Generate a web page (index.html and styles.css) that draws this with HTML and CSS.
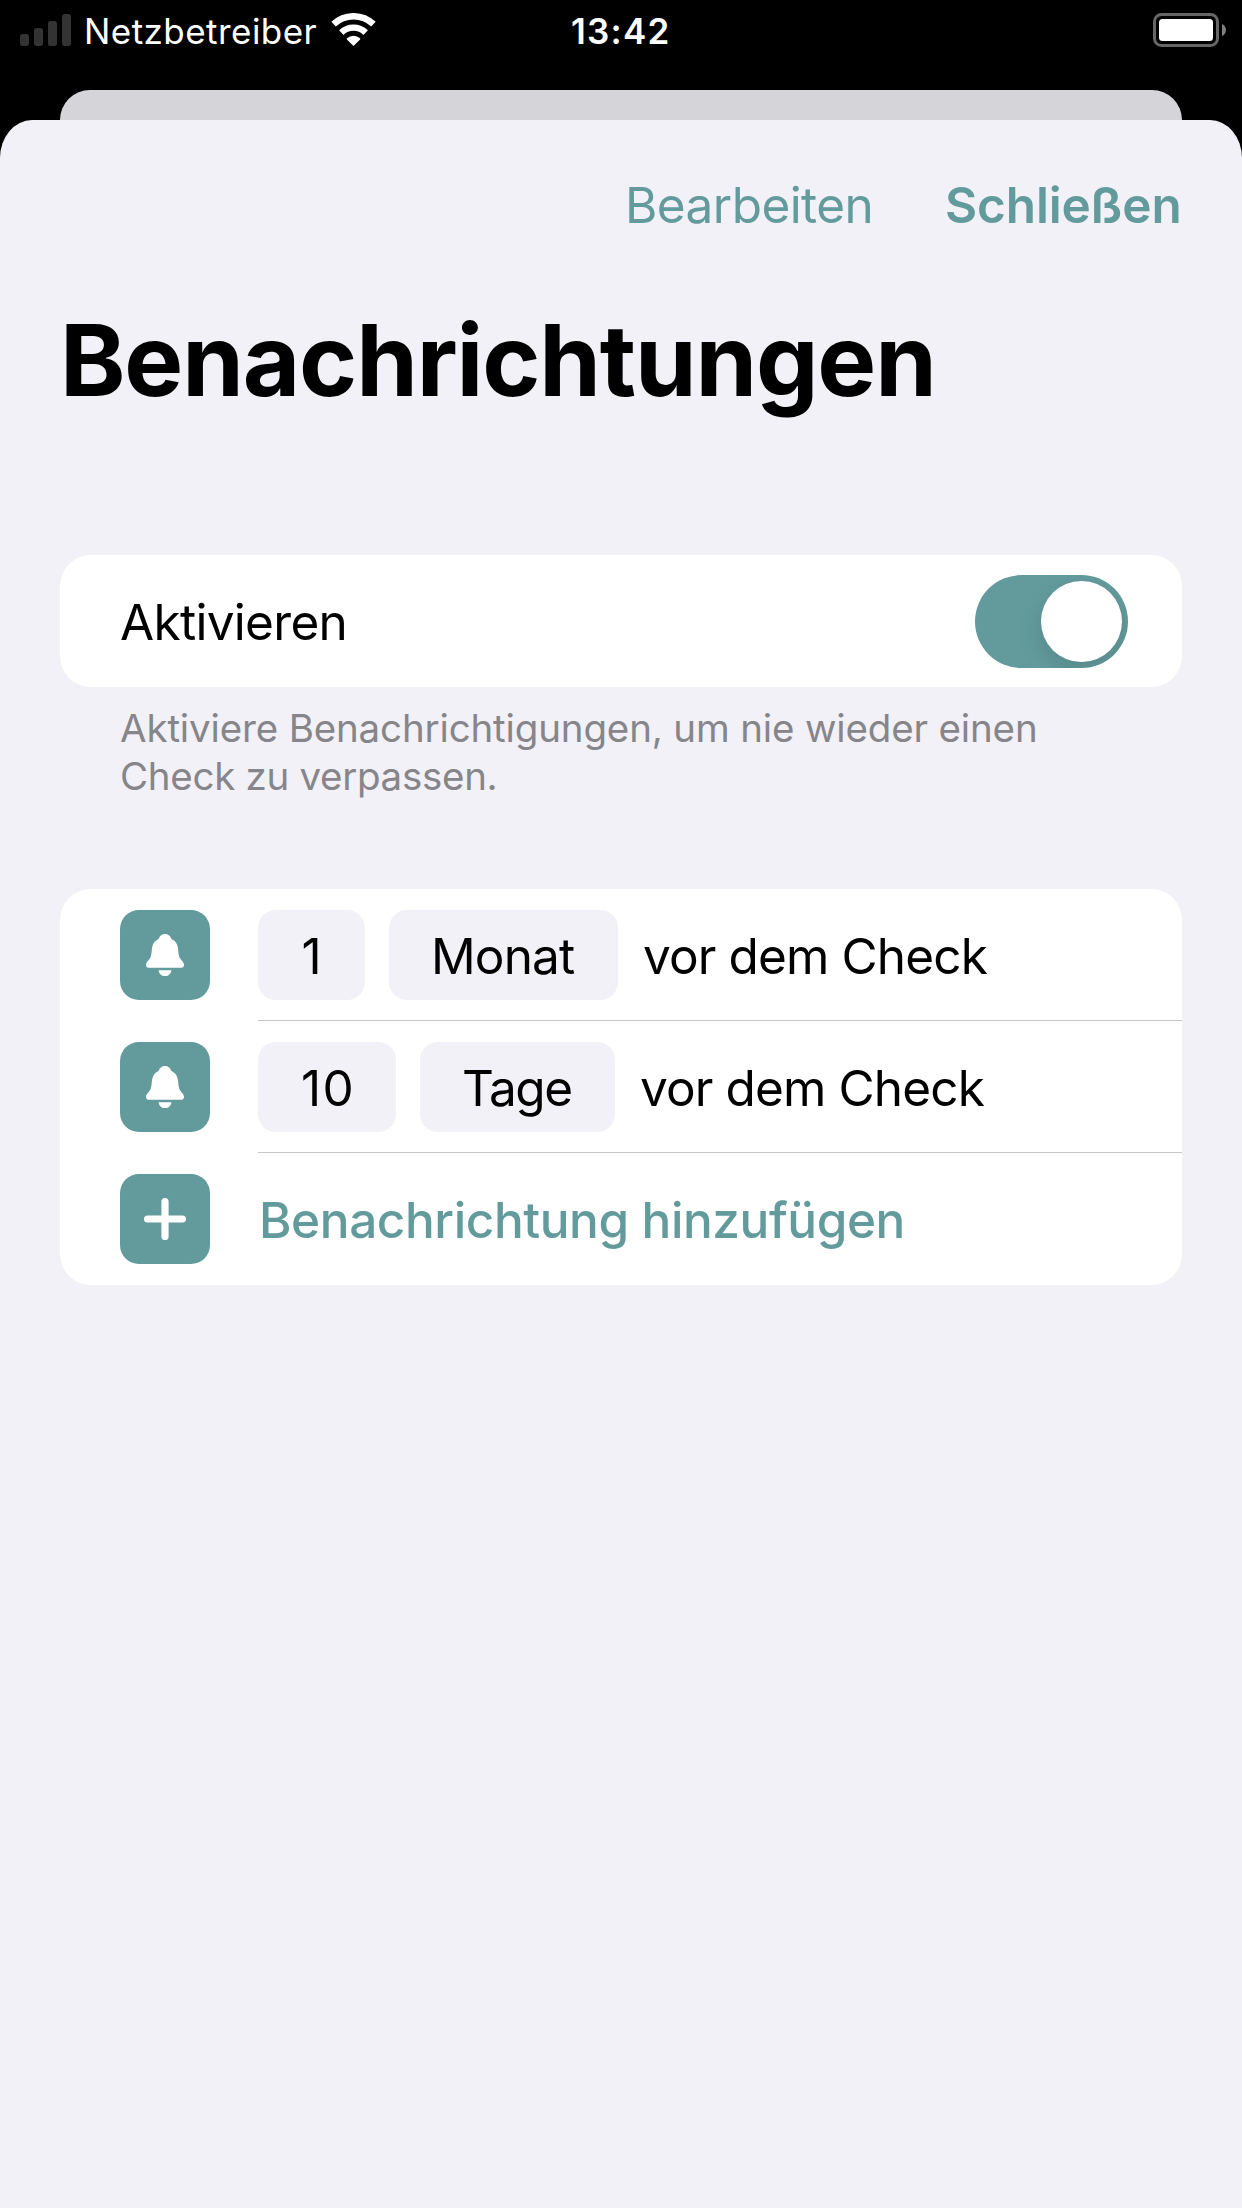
FILE: index.html
```html
<!DOCTYPE html>
<html lang="de">
<head>
<meta charset="utf-8">
<title>Benachrichtungen</title>
<link rel="stylesheet" href="styles.css">
</head>
<body>
<div class="status-bar">
  <div class="status-left">
    <svg class="signal" width="51" height="32" viewBox="0 0 51 32" fill="#333">
      <rect x="0" y="20" width="9" height="12" rx="2.5"/>
      <rect x="14" y="14" width="9" height="18" rx="2.5"/>
      <rect x="28" y="7" width="9" height="25" rx="2.5"/>
      <rect x="42" y="0" width="9" height="32" rx="2.5"/>
    </svg>
    <span class="carrier">Netzbetreiber</span>
    <svg class="wifi" width="45" height="33" viewBox="0 0 45 33">
      <g fill="none" stroke="#fff">
        <path d="M2.600 11.200A29 29 0 0 1 42.400 11.200" stroke-width="6.600"/>
        <path d="M10.300 19.600A17.500 17.500 0 0 1 34.700 19.600" stroke-width="6.400"/>
      </g>
      <path d="M22.500 33l-6.600-6.600q-.5-.6.1-1.100a9.600 9.600 0 0 1 13 0q.6.5.1 1.100z" fill="#fff"/>
    </svg>
  </div>
  <span class="time">13:42</span>
  <div class="status-right">
    <svg class="battery" width="73" height="34" viewBox="0 0 73 34">
      <rect x="1.500" y="1.500" width="63" height="31" rx="7" fill="none" stroke="#666" stroke-width="3"/>
      <rect x="6" y="6" width="54" height="22" rx="3.500" fill="#fff"/>
      <path d="M69 11c5.300 2 5.300 10 0 12z" fill="#808080"/>
    </svg>
  </div>
</div>
<div class="back-sheet"></div>
<main class="sheet">
  <nav class="toolbar">
    <span class="edit">Bearbeiten</span>
    <span class="close">Schließen</span>
  </nav>
  <h1 class="title">Benachrichtungen</h1>
  <section class="card toggle-row">
    <span class="toggle-label">Aktivieren</span>
    <span class="switch"><span class="knob"></span></span>
  </section>
  <p class="hint">Aktiviere Benachrichtigungen, um nie wieder einen<br><span class="hint-end">Check zu verpassen.</span></p>
  <section class="card list">
    <div class="row">
      <span class="tile">
        <svg width="38" height="42" viewBox="0 0 38 42" fill="#fff"><path d="M3.200 33.800C1.200 33.800 0 32.700 0 30.900C0 27.900 3.500 26.200 4.700 22.800C6.200 18.200 5.300 14.500 7.100 10.300C8.300 7.500 10.300 6.500 12.700 4.800C13.700 1.800 16 0 19 0S24.300 1.800 25.300 4.800C27.700 6.500 29.700 7.500 30.900 10.300C32.700 14.500 31.800 18.200 33.300 22.800C34.500 26.200 38 27.900 38 30.900C38 32.700 36.800 33.800 34.800 33.800Z"/><path d="M12.600 36.200H25.400C25.100 39.700 22.500 42 19 42S12.900 39.700 12.600 36.200Z"/></svg>
      </span>
      <div class="row-body">
        <span class="chip chip-1">1</span>
        <span class="chip chip-monat">Monat</span>
        <span class="suffix">vor dem Check</span>
      </div>
    </div>
    <div class="row">
      <span class="tile">
        <svg width="38" height="42" viewBox="0 0 38 42" fill="#fff"><path d="M3.200 33.800C1.200 33.800 0 32.700 0 30.900C0 27.900 3.500 26.200 4.700 22.800C6.200 18.200 5.300 14.500 7.100 10.300C8.300 7.500 10.300 6.500 12.700 4.800C13.700 1.800 16 0 19 0S24.300 1.800 25.300 4.800C27.700 6.500 29.700 7.500 30.900 10.300C32.700 14.500 31.800 18.200 33.300 22.800C34.500 26.200 38 27.900 38 30.900C38 32.700 36.800 33.800 34.800 33.800Z"/><path d="M12.600 36.200H25.400C25.100 39.700 22.500 42 19 42S12.900 39.700 12.600 36.200Z"/></svg>
      </span>
      <div class="row-body">
        <span class="chip chip-10">10</span>
        <span class="chip chip-tage">Tage</span>
        <span class="suffix">vor dem Check</span>
      </div>
    </div>
    <div class="row">
      <span class="tile">
        <svg width="42" height="42" viewBox="0 0 42 42" fill="none" stroke="#fff" stroke-width="7.200" stroke-linecap="round"><path d="M21 3.600V38.400M3.600 21H38.400"/></svg>
      </span>
      <div class="row-body">
        <span class="add">Benachrichtung hinzufügen</span>
      </div>
    </div>
  </section>
</main>
</body>
</html>
```
FILE: styles.css
```css
* { box-sizing: border-box; }

body {
  margin: 0;
  width: 1242px;
  height: 2208px;
  display: flex;
  flex-direction: column;
  overflow: hidden;
  background: #000;
  color: #000;
  font-family: Inter, "Liberation Sans", sans-serif;
  font-size: 49.5px;
  line-height: 60px;
  white-space: nowrap;
}

svg { display: block; flex: none; }

/* Status bar */
.status-bar {
  height: 90px;
  padding: 10px 16px 0 20px;
  display: grid;
  grid-template-columns: 551px 1fr auto;
  align-items: start;
  color: #fff;
  font-size: 35px;
  line-height: 42px;
}
.status-left { display: flex; align-items: flex-start; }
.signal { margin-top: 4px; }
.carrier { width: 246.5px; margin-left: 13px; letter-spacing: 0.45px; }
.wifi { margin-top: 3px; }
.time { font-weight: 600; letter-spacing: 1.24px; }
.battery { margin-top: 3px; }

/* Stacked sheets */
.back-sheet {
  height: 30px;
  margin: 0 60px;
  background: #d5d4d9;
  border-radius: 30px 30px 0 0;
}
.sheet {
  flex: 1;
  padding: 55px 60px 0;
  background: #f2f1f7;
  border-radius: 32px 32px 0 0 / 38px 38px 0 0;
}

.toolbar {
  height: 60px;
  display: flex;
  justify-content: flex-end;
  color: #639b9d;
}
.edit { width: 320px; letter-spacing: -0.57px; }
.close { width: 237px; font-weight: 600; letter-spacing: -0.15px; }

.title {
  margin: 65px 0 0;
  height: 120px;
  font-size: 99px;
  line-height: 120px;
  font-weight: 700;
  letter-spacing: -1.14px;
  color: #000;
}

/* Grouped cards */
.card { background: #fff; border-radius: 31px; }

.toggle-row {
  height: 132px;
  margin-top: 135px;
  padding: 0 54px 0 60px;
  display: flex;
  align-items: center;
  justify-content: space-between;
}
.toggle-label { padding-top: 2px; letter-spacing: -0.7px; }
.switch {
  width: 153px;
  height: 93px;
  padding: 6px;
  border-radius: 47px;
  background: #639b9d;
  display: flex;
  justify-content: flex-end;
  overflow: hidden;
}
.knob {
  width: 81px;
  height: 81px;
  border-radius: 50%;
  background: #fff;
  box-shadow: 0 9px 24px rgba(0, 0, 0, 0.13);
}

.hint {
  margin: 17px 0 0;
  padding-left: 60px;
  height: 96px;
  font-size: 38.5px;
  line-height: 48px;
  letter-spacing: -0.15px;
  color: #86858a;
}
.hint-end { letter-spacing: -0.3px; }

.list { margin-top: 89px; }
.row { height: 132px; padding-left: 60px; display: flex; align-items: center; }
.tile {
  width: 90px;
  height: 90px;
  flex: none;
  display: flex;
  align-items: center;
  justify-content: center;
  border-radius: 19px;
  background: #639b9d;
}
.row-body {
  flex: 1;
  height: 132px;
  margin-left: 48px;
  display: flex;
  align-items: center;
  border-bottom: 1px solid #c6c6c8;
}
.row:last-child .row-body { border-bottom: 0; }

.chip {
  height: 90px;
  padding-top: 16px;
  margin-right: 24px;
  line-height: 60px;
  border-radius: 18px;
  background: #f2f1f7;
}
.chip-1 { width: 107px; padding-left: 43.5px; }
.chip-10 { width: 138px; padding-left: 43px; letter-spacing: 1.3px; }
.chip-monat { width: 229px; padding-left: 42px; letter-spacing: -0.86px; }
.chip-tage { width: 195px; padding-left: 42px; letter-spacing: -1.4px; }
.suffix { padding: 2px 0 0 1px; letter-spacing: -0.87px; }
.add { padding: 1px 0 0 1px; color: #639b9d; font-weight: 500; letter-spacing: -0.41px; }
```
